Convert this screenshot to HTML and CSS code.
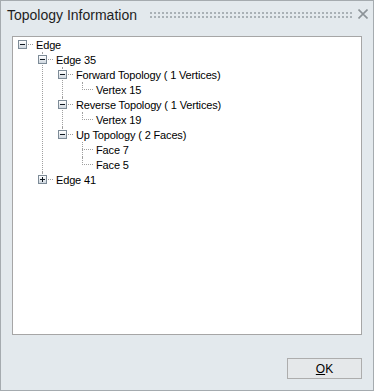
FILE: index.html
```html
<!DOCTYPE html>
<html lang="en">
<head>
  <meta charset="UTF-8" />
  <title>Topology Information</title>
  <link rel="stylesheet" href="styles.css">
</head>
<body>
  <div class="dialog">
    <!-- Title bar -->
    <div class="titlebar">
      <span class="title">Topology Information</span>
      <span class="grip"></span>
      <svg class="close" width="10" height="10" viewBox="0 0 10 10">
        <path d="M0.5 0.5 L9.5 9.5 M9.5 0.5 L0.5 9.5" stroke="#8c9398" stroke-width="1.6" fill="none"/>
      </svg>
    </div>

    <!-- Tree view -->
    <div class="panel">
      <ul class="tree">
        <li class="root last">
          <div class="row"><span class="exp minus"></span><span class="label">Edge</span></div>
          <ul>
            <li>
              <div class="row"><span class="exp minus"></span><span class="label">Edge 35</span></div>
              <ul>
                <li>
                  <div class="row"><span class="exp minus"></span><span class="label">Forward Topology ( 1 Vertices)</span></div>
                  <ul>
                    <li class="last"><div class="row"><span class="slot"></span><span class="label">Vertex 15</span></div></li>
                  </ul>
                </li>
                <li>
                  <div class="row"><span class="exp minus"></span><span class="label">Reverse Topology ( 1 Vertices)</span></div>
                  <ul>
                    <li class="last"><div class="row"><span class="slot"></span><span class="label">Vertex 19</span></div></li>
                  </ul>
                </li>
                <li class="last">
                  <div class="row"><span class="exp minus"></span><span class="label">Up Topology ( 2 Faces)</span></div>
                  <ul>
                    <li><div class="row"><span class="slot"></span><span class="label">Face 7</span></div></li>
                    <li class="last"><div class="row"><span class="slot"></span><span class="label">Face 5</span></div></li>
                  </ul>
                </li>
              </ul>
            </li>
            <li class="last">
              <div class="row"><span class="exp plus"></span><span class="label">Edge 41</span></div>
            </li>
          </ul>
        </li>
      </ul>
    </div>

    <!-- Buttons -->
    <div class="buttons">
      <button class="btn"><u>O</u>K</button>
    </div>
  </div>
</body>
</html>
```

FILE: styles.css
```css
:root {
  --bg-color: #e3e9ed;
  --border-color: #a5abaf;
  --line-color: #a0a0a0;
}
* {
  box-sizing: border-box;
}
body {
  margin: 0;
  font-family: 'Liberation Sans', Arial, sans-serif;
}
.dialog {
  width: 374px;
  height: 391px;
  background: var(--bg-color);
  border: 1px solid var(--border-color);
  display: flex;
  flex-direction: column;
}
/* Title bar */
.titlebar {
  height: 28px;
  display: flex;
  align-items: center;
  padding: 0 5px 0 6px;
}
.title {
  font-size: 14px;
  color: #1e1e1e;
}
.grip {
  flex: 1;
  height: 6px;
  margin: 0 5px 0 13px;
  background-image:
    linear-gradient(to right, transparent 2px, var(--bg-color) 2px),
    linear-gradient(to bottom, #a9b1b6 2px, transparent 2px);
  background-size: 4px 4px;
}
.close {
  display: block;
  margin-bottom: 2px;
}
/* Tree panel */
.panel {
  margin: 7px 11px 0 11px;
  height: 299px;
  background: #fff;
  border: 1px solid #a6a6a6;
  padding: 0 0 0 5px;
}
.tree,
.tree ul {
  list-style: none;
  margin: 0;
  padding: 0;
}
.tree ul {
  padding-left: 20px;
}
.tree li {
  position: relative;
}
/* vertical line between siblings */
.tree li::before {
  content: '';
  position: absolute;
  left: 4px;
  top: 0;
  bottom: 0;
  border-left: 1px dotted var(--line-color);
}
.tree li.last::before {
  bottom: auto;
  height: 8px;
}
.tree li.root::before {
  display: none;
}
.row {
  position: relative;
  display: flex;
  align-items: center;
  height: 15px;
  font-size: 11px;
  color: #000;
}
/* horizontal connector to the label */
.row::before {
  content: '';
  position: absolute;
  left: 4px;
  top: 7px;
  width: 11px;
  border-top: 1px dotted var(--line-color);
}
.slot {
  width: 9px;
  height: 9px;
  margin-right: 9px;
}
.label {
  white-space: nowrap;
  letter-spacing: -0.15px;
}
/* Expand / collapse boxes */
.exp {
  position: relative;
  z-index: 1;
  width: 9px;
  height: 9px;
  margin-right: 9px;
  border: 1px solid #7d8b97;
  background: linear-gradient(#ffffff, #cfd7df);
}
.exp::before {
  content: '';
  position: absolute;
  left: 1px;
  top: 3px;
  width: 5px;
  height: 1px;
  background: #101820;
}
.exp.plus::after {
  content: '';
  position: absolute;
  left: 3px;
  top: 1px;
  width: 1px;
  height: 5px;
  background: #101820;
}
/* Bottom buttons */
.buttons {
  display: flex;
  justify-content: flex-end;
  padding: 23px 11px 0 0;
}
.btn {
  width: 75px;
  height: 21px;
  padding: 0;
  border: 1px solid #adadad;
  background: #e5e8ea;
  font-family: 'Liberation Sans', Arial, sans-serif;
  font-size: 12px;
  color: #000;
}
.btn u {
  text-underline-offset: 1px;
}
```
